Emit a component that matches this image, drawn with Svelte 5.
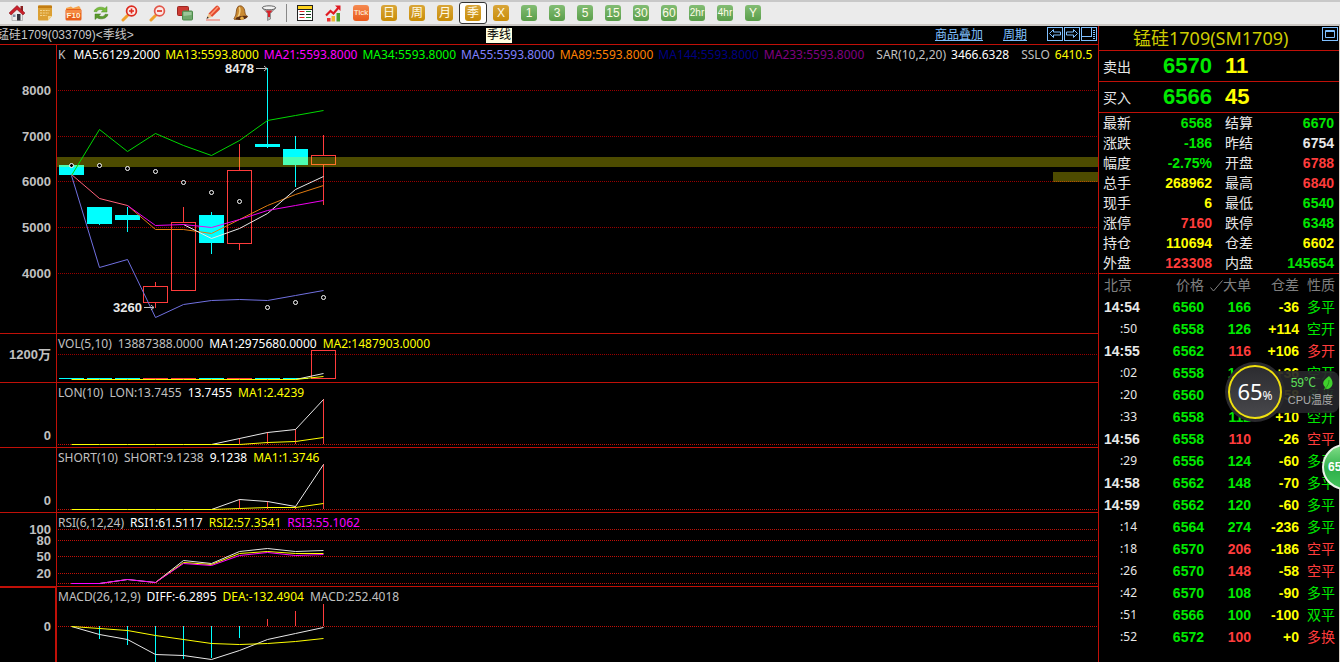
<script lang="ts">
    type Candle = {
        up: boolean;
        high: number;
        top: number;
        bottom: number;
        low: number;
    };

    type Series = { color: string; from?: number; ys: number[] };
    type Stick = { i: number; y: number; color: string };

    interface Pane {
        id: string;
        height: number;
        head: { text: string; color: string }[];
        labels: { text: string; y: number }[];
        grid: number[];
        bright?: boolean;
        base?: number;
        sticks?: Stick[];
        series: Series[];
    }

    const RED = "#ff3c3c";
    const CYAN = "#00ffff";
    const WHITE = "#e8e8e8";
    const YELLOW = "#ffff00";
    const MAGENTA = "#ff00ff";
    const GREY = "#c0c0c0";

    const periods = [
        { text: "日", kind: "gold" },
        { text: "周", kind: "gold" },
        { text: "月", kind: "gold" },
        { text: "季", kind: "gold", tip: "季线" },
        { text: "X", kind: "gold" },
        { text: "1", kind: "green" },
        { text: "3", kind: "green" },
        { text: "5", kind: "green" },
        { text: "15", kind: "green" },
        { text: "30", kind: "green" },
        { text: "60", kind: "green" },
        { text: "2hr", kind: "green small" },
        { text: "4hr", kind: "green small" },
        { text: "Y", kind: "green" },
    ];

    let period = $state("季");

    // pixel rows inside the K-line plot
    const candles: Candle[] = [
        { up: false, high: 120, top: 120, bottom: 130, low: 130 },
        { up: false, high: 162, top: 162, bottom: 179, low: 180 },
        { up: false, high: 162, top: 170, bottom: 175, low: 187 },
        { up: true, high: 237, top: 241, bottom: 258, low: 263 },
        { up: true, high: 162, top: 177, bottom: 246, low: 246 },
        { up: false, high: 167, top: 170, bottom: 198, low: 209 },
        { up: true, high: 99, top: 125, bottom: 199, low: 205 },
        { up: false, high: 23, top: 99, bottom: 102, low: 103 },
        { up: false, high: 91, top: 104, bottom: 120, low: 142 },
        { up: true, high: 90, top: 110, bottom: 120, low: 160 },
    ];

    const sar = [120, 120, 123, 126, 137, 147, 156, 262, 257, 252];

    const panes: Pane[] = [
        {
            id: "k",
            height: 288,
            head: [
                { text: "K", color: GREY },
                { text: "MA5:6129.2000", color: "#ffffff" },
                { text: "MA13:5593.8000", color: YELLOW },
                { text: "MA21:5593.8000", color: MAGENTA },
                { text: "MA34:5593.8000", color: "#00ff00" },
                { text: "MA55:5593.8000", color: "#8080ff" },
                { text: "MA89:5593.8000", color: "#ff8000" },
                { text: "MA144:5593.8000", color: "#000080" },
                { text: "MA233:5593.8000", color: "#800080" },
                { text: "SAR(10,2,20)", color: GREY },
                { text: "3466.6328", color: "#ffffff" },
                { text: "SSLO", color: GREY },
                { text: "6410.5", color: YELLOW },
            ],
            labels: [
                { text: "8000", y: 45 },
                { text: "7000", y: 91 },
                { text: "6000", y: 136 },
                { text: "5000", y: 182 },
                { text: "4000", y: 228 },
            ],
            grid: [45, 91, 136, 182, 228],
            series: [
                { color: "#00d800", ys: [130, 84, 106, 88, 100, 110, 95, 75, 70, 65] },
                { color: "#7070e0", ys: [130, 222, 214, 272, 259, 255, 254, 255, 250, 245] },
                { color: "#e07a10", from: 2, ys: [160, 184, 184, 188, 174, 160, 149, 140] },
                { color: WHITE, from: 4, ys: [179, 193, 183, 168, 144, 131] },
                { color: "#f000f0", from: 2, ys: [160, 180, 179, 182, 174, 165, 160, 155] },
                { color: "#ff6078", ys: [129, 153, 160] },
            ],
        },
        {
            id: "vol",
            height: 48,
            head: [
                { text: "VOL(5,10)", color: GREY },
                { text: "13887388.0000", color: GREY },
                { text: "MA1:2975680.0000", color: "#ffffff" },
                { text: "MA2:1487903.0000", color: YELLOW },
            ],
            labels: [{ text: "1200万", y: 20 }],
            grid: [20],
            series: [
                { color: WHITE, from: 8, ys: [45, 39] },
                { color: YELLOW, ys: [45, 45, 45, 45, 45, 45, 45, 45, 45, 42] },
            ],
        },
        {
            id: "lon",
            height: 64,
            head: [
                { text: "LON(10)", color: GREY },
                { text: "LON:13.7455", color: GREY },
                { text: "13.7455", color: "#ffffff" },
                { text: "MA1:2.4239", color: YELLOW },
            ],
            labels: [{ text: "0", y: 52 }],
            grid: [61],
            bright: true,
            base: 61,
            sticks: [
                { i: 6, y: 55, color: RED },
                { i: 7, y: 49, color: RED },
                { i: 8, y: 46, color: RED },
                { i: 9, y: 16, color: RED },
            ],
            series: [
                { color: WHITE, from: 5, ys: [61, 55, 49, 46, 16] },
                { color: YELLOW, ys: [61, 61, 61, 61, 61, 61, 61, 59, 58, 54] },
            ],
        },
        {
            id: "short",
            height: 64,
            head: [
                { text: "SHORT(10)", color: GREY },
                { text: "SHORT:9.1238", color: GREY },
                { text: "9.1238", color: "#ffffff" },
                { text: "MA1:1.3746", color: YELLOW },
            ],
            labels: [{ text: "0", y: 52 }],
            grid: [61],
            bright: true,
            base: 61,
            sticks: [
                { i: 6, y: 51, color: RED },
                { i: 7, y: 53, color: RED },
                { i: 8, y: 58, color: RED },
                { i: 9, y: 16, color: RED },
            ],
            series: [
                { color: WHITE, from: 5, ys: [61, 51, 53, 58, 16] },
                { color: YELLOW, ys: [61, 61, 61, 61, 61, 61, 60, 59, 59, 55] },
            ],
        },
        {
            id: "rsi",
            height: 73,
            head: [
                { text: "RSI(6,12,24)", color: GREY },
                { text: "RSI1:61.5117", color: "#ffffff" },
                { text: "RSI2:57.3541", color: YELLOW },
                { text: "RSI3:55.1062", color: MAGENTA },
            ],
            labels: [
                { text: "100", y: 16 },
                { text: "80", y: 27 },
                { text: "50", y: 43 },
                { text: "20", y: 60 },
            ],
            grid: [16, 27, 43, 60, 70],
            bright: true,
            series: [
                { color: WHITE, ys: [70, 70, 66, 69, 47, 50, 38, 35, 38, 37] },
                { color: YELLOW, from: 3, ys: [69, 49, 51, 40, 38, 40, 40] },
                { color: MAGENTA, ys: [70, 70, 66, 69, 50, 52, 42, 39, 42, 41] },
            ],
        },
        {
            id: "macd",
            height: 75,
            head: [
                { text: "MACD(26,12,9)", color: GREY },
                { text: "DIFF:-6.2895", color: "#ffffff" },
                { text: "DEA:-132.4904", color: YELLOW },
                { text: "MACD:252.4018", color: GREY },
            ],
            labels: [{ text: "0", y: 39 }],
            grid: [39],
            bright: true,
            base: 39,
            sticks: [
                { i: 1, y: 52, color: CYAN },
                { i: 2, y: 58, color: CYAN },
                { i: 3, y: 75, color: CYAN },
                { i: 4, y: 72, color: CYAN },
                { i: 5, y: 71, color: CYAN },
                { i: 6, y: 51, color: CYAN },
                { i: 7, y: 32, color: RED },
                { i: 8, y: 24, color: RED },
                { i: 9, y: 17, color: RED },
            ],
            series: [
                { color: WHITE, ys: [39, 47, 52, 67, 68, 72, 63, 52, 46, 40] },
                { color: YELLOW, ys: [39, 41, 43, 48, 52, 56, 57, 56, 54, 51] },
            ],
        },
    ];

    const quote = [
        ["最新", "6568", "g", "结算", "6670", "g"],
        ["涨跌", "-186", "g", "昨结", "6754", "w"],
        ["幅度", "-2.75%", "g", "开盘", "6788", "r"],
        ["总手", "268962", "y", "最高", "6840", "r"],
        ["现手", "6", "y", "最低", "6540", "g"],
        ["涨停", "7160", "r", "跌停", "6348", "g"],
        ["持仓", "110694", "y", "仓差", "6602", "y"],
        ["外盘", "123308", "r", "内盘", "145654", "g"],
    ];

    const ticks = [
        ["14:54", "6560", "166", "g", "-36", "多平"],
        [":50", "6558", "126", "g", "+114", "空开"],
        ["14:55", "6562", "116", "r", "+106", "多开"],
        [":02", "6558", "136", "g", "+36", "空开"],
        [":20", "6560", "108", "g", "-58", "多平"],
        [":33", "6558", "112", "g", "+10", "空开"],
        ["14:56", "6558", "110", "r", "-26", "空平"],
        [":29", "6556", "124", "g", "-60", "多平"],
        ["14:58", "6562", "148", "g", "-70", "多平"],
        ["14:59", "6562", "120", "g", "-60", "多平"],
        [":14", "6564", "274", "g", "-236", "多平"],
        [":18", "6570", "206", "r", "-186", "空平"],
        [":26", "6570", "148", "r", "-58", "空平"],
        [":42", "6570", "108", "g", "-90", "多平"],
        [":51", "6566", "100", "g", "-100", "双平"],
        [":52", "6572", "100", "r", "+0", "多换"],
    ];

    const STEP = 28;
    const cx = (i: number) => 14.5 + i * STEP;

    function points(s: Series) {
        return s.ys.map((y, i) => `${cx(i + (s.from ?? 0))},${y + 0.5}`).join(" ");
    }
</script>

<div class="app">
    <div class="toolbar" role="toolbar" aria-label="工具栏">
        <button aria-label="首页">
            <svg width="16" height="16" viewBox="0 0 16 16">
                <path d="M3 8v7.500h10.500V8L8 3.500z" fill="#ececec" stroke="#999" stroke-width=".6" />
                <path d="M8 9h3.500v6.500H8z" fill="#34343e" />
                <path d="M4 9.500h2.500V12H4z" fill="#7d8fa5" />
                <path d="M11.500 1H14v5h-2.500z" fill="#8a2020" />
                <path d="M8 .5L0 8l2 2 6-5.500L14 10l2-2z" fill="#c9202c" stroke="#7d1015" stroke-width=".5" />
            </svg>
        </button>
        <button aria-label="公告">
            <svg width="16" height="16" viewBox="0 0 16 16">
                <path d="M1 1.500Q1 .5 2 .5h12q1 0 1 1V11l-4 4.500H2q-1 0-1-1z" fill="#dca034" />
                <path d="M1 1.500Q1 .5 2 .5h12q1 0 1 1V3H1z" fill="#c27c12" />
                <path d="M15 11l-4 4.500V11z" fill="#f5d58a" />
                <path d="M3 5.500h9.500M3 8h9M3 10.500h6.500" stroke="#f4d48c" stroke-dasharray="2 .8" />
            </svg>
        </button>
        <button aria-label="F10">
            <svg width="17" height="16" viewBox="0 0 17 16">
                <path d="M1 3l5-1.500L8 3l6-2 1.500 2v10L1 15z" fill="#f6a24a" />
                <rect x=".5" y="4" width="16" height="11.500" rx="1.500" fill="#e8601c" />
                <path d="M1 5h15v3L1 10z" fill="#f58a42" />
                <text class="icon-f10" x="8.500" y="13" text-anchor="middle">F10</text>
            </svg>
        </button>
        <button aria-label="刷新">
            <svg width="16" height="16" viewBox="0 0 16 16">
                <path d="M1 6.500C2 2.500 8 .8 12 3.300L14 1.500V7H8.300l1.900-1.800C7.500 3.800 4.500 4.500 3.800 6.800z" fill="#78bd3c" stroke="#4f8e22" stroke-width=".5" />
                <path d="M15 9.500C14 13.500 8 15.200 4 12.700L2 14.500V9h5.700l-1.900 1.800c2.700 1.400 5.700.7 6.400-1.600z" fill="#5b9a2c" stroke="#3f771a" stroke-width=".5" />
            </svg>
        </button>
        <button aria-label="放大">
            <svg width="17" height="17" viewBox="0 0 17 17">
                <path d="M6.500 10.500l-4.500 4.500" stroke="#f0a02c" stroke-width="3" stroke-linecap="round" />
                <circle cx="10.500" cy="6" r="4.900" fill="#fbe9e6" stroke="#dc2b20" stroke-width="1.700" />
                <path d="M10.500 3.500v5M8 6h5" stroke="#e0281c" stroke-width="1.600" />
            </svg>
        </button>
        <button aria-label="缩小">
            <svg width="17" height="17" viewBox="0 0 17 17">
                <path d="M6.500 10.500l-4.500 4.500" stroke="#f0a02c" stroke-width="3" stroke-linecap="round" />
                <circle cx="10.500" cy="6" r="4.900" fill="#fbe9e6" stroke="#e2564a" stroke-width="1.700" />
                <path d="M8 6h5" stroke="#e0281c" stroke-width="1.600" />
            </svg>
        </button>
        <button aria-label="叠加">
            <svg width="16" height="16" viewBox="0 0 16 16">
                <rect x=".5" y="1.500" width="11" height="9" rx="1" fill="#cc3a33" stroke="#9c2722" />
                <rect x="5.500" y="6" width="10" height="9" rx="1" fill="#6fa86c" stroke="#4c8a4a" />
                <path d="M6.500 7h8v3l-8 1z" fill="#9bc698" />
            </svg>
        </button>
        <button aria-label="画线">
            <svg width="16" height="16" viewBox="0 0 16 16">
                <path d="M3.500 8.500L11 1q1.200-1 2.400.2l1.200 1.200q1 1.200 0 2.400L7 12z" fill="#e2492e" />
                <path d="M5.500 9.800L13 2" stroke="#ff9b78" stroke-width="1.500" />
                <path d="M3.500 8.500L7 12l-5.500 1.800z" fill="#f0c58c" />
                <path d="M2.500 11.500l-1 2.300 2.300-.7z" fill="#222" />
                <path d="M1 15h14" stroke="#f06a5a" />
            </svg>
        </button>
        <button aria-label="预警">
            <svg width="16" height="16" viewBox="0 0 16 16">
                <path d="M5 1.500c3.500-2 6.500 1 6.800 5 .2 2.500 1 4 3 5L2.500 14.500C1 15 .5 13.500 1.500 12.500 4 10 2.500 4 5 1.500z" fill="#c98a32" stroke="#7b4514" stroke-width=".8" />
                <path d="M6 2.500c1.500.5 1 7-1 9.500" stroke="#f3cf86" stroke-width="1.500" fill="none" />
                <ellipse cx="8.500" cy="12.800" rx="6" ry="1.900" fill="#5a2d10" transform="rotate(-10 8.500 12.800)" />
                <circle cx="9" cy="13.300" r="1.800" fill="#e9ae45" />
            </svg>
        </button>
        <button aria-label="筛选">
            <svg width="16" height="16" viewBox="0 0 16 16">
                <path d="M1.500 3L6.500 8.500V15.500l3-1.500V8.500l5-5.500z" fill="#b9b9b9" stroke="#666" stroke-width=".6" />
                <ellipse cx="8" cy="2.800" rx="6.700" ry="2" fill="#f3f3f3" stroke="#555" stroke-width=".9" />
                <path d="M4.500 5.500h7L9 8.500v3.500H7V8.500z" fill="#d7222a" />
            </svg>
        </button>
        <span class="separator"></span>
        <button aria-label="报价表">
            <svg width="16" height="16" viewBox="0 0 16 16">
                <rect x=".5" y=".5" width="15" height="15" fill="#fff" stroke="#222" />
                <path d="M1 1h14v3.500H1z" fill="#ffd21c" />
                <path d="M1 4.500h14" stroke="#222" />
                <path d="M2.500 6.500h5M2.500 12.500h5" stroke="#d22" />
                <path d="M9 6.500h5M9 12.500h5" stroke="#1b8a2c" />
                <path d="M2.500 9.500h5M9 9.500h5" stroke="#222" />
            </svg>
        </button>
        <button aria-label="走势图">
            <svg width="17" height="17" viewBox="0 0 17 17">
                <path d="M2 13h3.500v3.500H2z" fill="#e33" />
                <path d="M6.500 11h3.500v5.500H6.500z" fill="#f2b632" />
                <path d="M11.500 8H15v8.500h-3.500z" fill="#4ca02e" />
                <path d="M1 10.500l4.500-4.500 3 2.500L14 2" fill="none" stroke="#e01b22" stroke-width="2.200" />
                <path d="M10 .5h5.500V6z" fill="#e01b22" />
            </svg>
        </button>
        <button class="period"><span class="tile tick">Tick</span></button>
        {#each periods as p (p.text)}
            <button
                class="period"
                class:selected={period === p.text}
                aria-pressed={period === p.text}
                onclick={() => (period = p.text)}
            >
                <span class="tile {p.kind}">{p.text}</span>
                {#if period === p.text && p.tip}
                    <span class="tip" role="tooltip">{p.tip}</span>
                {/if}
            </button>
        {/each}
    </div>

    <main>
        <section class="charts">
            <header class="chart-title">
                <h1>锰硅1709(033709)&lt;季线&gt;</h1>
                <nav>
                    <a href="#overlay">商品叠加</a>
                    <a href="#period">周期</a>
                    <div class="view-buttons">
                        <button aria-label="向左">
                            <svg width="16" height="14" viewBox="0 0 16 14">
                                <rect x=".5" y=".5" width="15" height="13" />
                                <path d="M2.500 6.500l4-4v2.500h7v3h-7v2.500z" />
                            </svg>
                        </button>
                        <button aria-label="向右">
                            <svg width="16" height="14" viewBox="0 0 16 14">
                                <rect x=".5" y=".5" width="15" height="13" />
                                <path d="M13.500 6.500l-4-4v2.500h-7v3h7v2.500z" />
                            </svg>
                        </button>
                        <button aria-label="布局">
                            <svg width="16" height="14" viewBox="0 0 16 14">
                                <rect x=".5" y=".5" width="15" height="13" />
                                <path d="M1 9.500h10M10.500 1v9M12 3.500h2M12 5.500h2M12 7.500h2M12 9.500h2M12 11.500h2" />
                            </svg>
                        </button>
                    </div>
                </nav>
            </header>

            {#each panes as pane (pane.id)}
                <div class="pane {pane.id}">
                    <svg class="axis" height={pane.height}>
                        {#each pane.labels as label}
                            <text x="51" y={label.y + 5} text-anchor="end">{label.text}</text>
                        {/each}
                    </svg>
                    <div class="plot">
                        <svg width="100%" height={pane.height}>
                            {#each pane.grid as y}
                                <line
                                    class="grid"
                                    class:bright={pane.bright}
                                    x1="1"
                                    x2="100%"
                                    y1={y + 0.5}
                                    y2={y + 0.5}
                                />
                            {/each}

                            {#if pane.id === "k"}
                                {#each candles as c, i}
                                    {@const color = c.up ? RED : CYAN}
                                    <path
                                        class="crisp"
                                        d="M{cx(i)} {c.high}V{c.top}M{cx(i)} {c.bottom}V{c.low}"
                                        stroke={color}
                                    />
                                    {#if c.up}
                                        <rect
                                            class="crisp"
                                            x={cx(i) - 12}
                                            y={c.top + 0.5}
                                            width="24"
                                            height={c.bottom - c.top - 1}
                                            fill="none"
                                            stroke={color}
                                        />
                                    {:else}
                                        <rect
                                            x={cx(i) - 12.5}
                                            y={c.top}
                                            width="25"
                                            height={c.bottom - c.top}
                                            fill={color}
                                        />
                                    {/if}
                                {/each}
                                <rect class="band" x="0" y="112" width="100%" height="10" />
                                <svg x="100%" y="0" overflow="visible">
                                    <rect class="band" x="-45" y="127" width="45" height="10" />
                                </svg>
                            {/if}

                            {#if pane.id === "vol"}
                                {#each candles.slice(0, 9) as c, i}
                                    <rect
                                        x={cx(i) - 12.5}
                                        y="44"
                                        width="25"
                                        height="1"
                                        fill={c.up ? RED : CYAN}
                                    />
                                {/each}
                                <rect
                                    class="crisp"
                                    x={cx(9) - 12}
                                    y="16.500"
                                    width="24"
                                    height="28"
                                    fill="none"
                                    stroke={RED}
                                />
                            {/if}

                            {#each pane.sticks ?? [] as s}
                                <line
                                    class="crisp"
                                    x1={cx(s.i)}
                                    x2={cx(s.i)}
                                    y1={pane.base}
                                    y2={s.y}
                                    stroke={s.color}
                                />
                            {/each}

                            {#each pane.series as s}
                                <polyline points={points(s)} stroke={s.color} />
                            {/each}

                            {#if pane.id === "k"}
                                {#each sar as y, i}
                                    <circle class="sar" cx={cx(i)} cy={y + 0.5} r="2" />
                                {/each}
                                <text class="mark" x="168" y="28">8478</text>
                                <path class="arrow" d="M199 23.500h11M207 21l3 2.500l-3 2.500" />
                                <text class="mark" x="56" y="267">3260</text>
                                <path class="arrow" d="M87 262.500h10M94 260l3 2.500l-3 2.500" />
                            {/if}
                        </svg>
                        <div class="head">
                            {#each pane.head as h}
                                <span style:color={h.color}>{h.text}</span>
                            {/each}
                        </div>
                    </div>
                </div>
            {/each}
        </section>

        <aside class="quote">
            <header>
                <h2>锰硅1709(SM1709)</h2>
                <button aria-label="最大化">
                    <svg width="16" height="14" viewBox="0 0 16 14">
                        <rect x=".5" y=".5" width="15" height="13" />
                        <path d="M3.500 3.500h9v7h-9zM3.500 4.500h9" />
                    </svg>
                </button>
            </header>

            <div class="order">
                <span>卖出</span><b class="g">6570</b><b class="y">11</b>
            </div>
            <div class="order">
                <span>买入</span><b class="g">6566</b><b class="y">45</b>
            </div>

            <dl>
                {#each quote as q}
                    <dt>{q[0]}</dt>
                    <dd class={q[2]}>{q[1]}</dd>
                    <dt class="second">{q[3]}</dt>
                    <dd class={q[5]}>{q[4]}</dd>
                {/each}
            </dl>

            <table>
                <thead>
                    <tr>
                        <th class="time">北京</th>
                        <th class="price">价格</th>
                        <th class="lots">
                            <svg width="13" height="13" viewBox="0 0 13 13" aria-hidden="true">
                                <path d="M.5 8.500l3 3.500L12.500 1.500" />
                            </svg>大单
                        </th>
                        <th class="diff">仓差</th>
                        <th class="kind">性质</th>
                    </tr>
                </thead>
                <tbody>
                    {#each ticks as t}
                        <tr>
                            <td class="time" class:seconds={t[0].startsWith(":")}>{t[0]}</td>
                            <td class="g">{t[1]}</td>
                            <td class={t[3]}>{t[2]}</td>
                            <td class="y">{t[4]}</td>
                            <td class="kind {t[3]}">{t[5]}</td>
                        </tr>
                    {/each}
                </tbody>
            </table>

            <div class="cpu">
                <div class="cpu-info">
                    <span class="temp">
                        59℃
                        <svg width="11" height="15" viewBox="0 0 11 15">
                            <path d="M7 0c4 4 5 9 1 12-2 1.500-4 1-4.500.500L2 14.500 3 11C-1 7 2 4 7 0z" fill="#3fd12c" />
                            <path d="M7 4c0 3-1 6-4.500 9" stroke="#1d7a14" stroke-width=".7" fill="none" />
                        </svg>
                    </span>
                    <span class="cpu-label">CPU温度</span>
                </div>
                <div class="gauge">65<small>%</small></div>
            </div>
            <div class="ball-clip"><div class="ball">65</div></div>
        </aside>
    </main>
</div>

<style>
    :global(body) {
        margin: 0;
        background: #000;
    }

    .app {
        --line: #c01008;
        --sky: #80c0ff;
        min-height: 100vh;
        display: flex;
        flex-direction: column;
        color: #e8e8e8;
        font-family: "Liberation Sans", "Noto Sans CJK SC", sans-serif;
        font-size: 12px;
    }

    button {
        border: none;
        background: none;
        padding: 0;
        margin: 0;
        font: inherit;
        color: inherit;
        cursor: pointer;
    }

    h1,
    h2 {
        margin: 0;
        font-weight: normal;
    }

    .toolbar {
        display: flex;
        align-items: center;
        height: 26px;
        box-sizing: border-box;
        padding-left: 3px;
        background: #ebebeb;
        border-top: 2px solid #c8c8c8;
        border-bottom: 2px solid #cbc7c3;
    }

    .toolbar button {
        width: 28px;
        height: 22px;
        display: flex;
        flex: none;
        align-items: center;
        justify-content: center;
        position: relative;
        box-sizing: border-box;
    }

    .toolbar .selected {
        background: #fff;
        border: 1px solid #333;
        border-radius: 3px;
    }

    .icon-f10 {
        font: bold 8px "Liberation Sans", sans-serif;
        fill: #fff4d8;
    }

    .separator {
        width: 1px;
        height: 18px;
        margin: 0 4px 0 3px;
        background: #888;
    }

    .tile {
        width: 16px;
        height: 16px;
        border-radius: 3px;
        color: #fffbe8;
        font-size: 12px;
        line-height: 16px;
        text-align: center;
        white-space: nowrap;
    }

    .tile.gold {
        background: linear-gradient(#d9a63a, #c98d08);
    }

    .tile.green {
        background: linear-gradient(#83bd74, #5a9e4a);
    }

    .tile.tick {
        background: linear-gradient(#f58a50, #ea5a1c);
        font-size: 8px;
    }

    .tile.small {
        font-size: 10px;
    }

    .tip {
        position: absolute;
        top: 25px;
        left: 26px;
        z-index: 2;
        padding: 0 1px;
        background: #ffffe1;
        color: #000;
        line-height: 15px;
        white-space: nowrap;
    }

    main {
        flex: 1;
        display: grid;
        grid-template-columns: minmax(0, 1fr) 242px;
    }

    .charts {
        display: flex;
        flex-direction: column;
    }

    .chart-title {
        display: flex;
        justify-content: space-between;
        height: 18px;
        overflow: hidden;
        line-height: 18px;
    }

    .chart-title h1 {
        margin-left: -3px;
        font-size: 12px;
        color: #c8c8c8;
    }

    .chart-title nav {
        display: flex;
        gap: 20px;
        padding-right: 1px;
    }

    .chart-title a {
        color: var(--sky);
        text-decoration: underline;
    }

    .view-buttons {
        display: flex;
        gap: 1px;
    }

    .view-buttons button,
    .quote header button {
        height: 16px;
        display: flex;
        align-items: center;
    }

    .view-buttons svg,
    .quote header svg {
        fill: none;
        stroke: var(--sky);
    }

    .pane {
        display: grid;
        grid-template-columns: 57px minmax(0, 1fr);
        border-top: 1px solid var(--line);
    }

    .pane svg {
        display: block;
    }

    .axis {
        width: 56px;
        border-right: 1px solid var(--line);
        font-size: 13px;
        font-weight: bold;
        fill: #c0c0c0;
    }

    .macd .axis {
        width: 55px;
        border-right: 2px solid var(--line);
        box-shadow: inset 0 1px var(--line);
    }

    .plot {
        display: grid;
        overflow: hidden;
    }

    .plot > * {
        grid-area: 1 / 1;
    }

    .grid {
        stroke: #900;
        stroke-dasharray: 1 1;
        shape-rendering: crispEdges;
    }

    .grid.bright {
        stroke: #c01008;
    }

    .crisp {
        shape-rendering: crispEdges;
    }

    .band {
        fill: rgba(255, 247, 0, 0.3);
    }

    polyline {
        fill: none;
    }

    .sar {
        fill: #000;
        stroke: #fff;
    }

    .mark {
        font-size: 13px;
        font-weight: bold;
        fill: #e8e8e8;
    }

    .arrow {
        fill: none;
        stroke: #c0c0c0;
    }

    .head {
        position: relative;
        display: flex;
        gap: 6px;
        padding: 1px 0 0 1px;
        font-family: "Noto Sans", sans-serif;
        font-size: 12px;
        line-height: 17px;
        height: 17px;
        white-space: nowrap;
    }

    .k .head {
        gap: 5px;
    }

    .k .head span:first-child {
        margin-right: 3px;
    }

    .k .head span:nth-child(9),
    .k .head span:nth-child(11) {
        margin-right: 7px;
    }

    .quote {
        position: relative;
        border-left: 1px solid var(--line);
        border-right: 1px solid #d8d0c8;
        font-size: 14px;
    }

    .quote header {
        display: flex;
        justify-content: space-between;
        height: 24px;
        padding: 0 1px 0 34px;
        border-bottom: 1px solid var(--line);
    }

    .quote h2 {
        font-family: "Noto Sans", "Noto Sans CJK SC", sans-serif;
        font-size: 18px;
        line-height: 24px;
        color: #cccc00;
    }

    .order {
        display: grid;
        grid-template-columns: 44px 65px 1fr;
        align-items: center;
        height: 30px;
        padding-left: 4px;
        border-bottom: 1px solid var(--line);
    }

    .order b {
        font-size: 22px;
        text-align: right;
    }

    .order .y {
        text-align: left;
        padding-left: 13px;
    }

    dl {
        display: grid;
        grid-template-columns: 40px 69px 45px 1fr;
        margin: 0;
        padding: 0 5px 0 4px;
        line-height: 20px;
        border-bottom: 1px solid var(--line);
    }

    dt.second {
        padding-left: 13px;
    }

    dd {
        margin: 0;
        text-align: right;
        font-weight: bold;
    }

    table {
        width: 100%;
        table-layout: fixed;
        border-collapse: collapse;
        line-height: 22px;
    }

    th,
    td {
        height: 22px;
        padding: 0;
        text-align: right;
        font-weight: bold;
        white-space: nowrap;
    }

    th {
        font-weight: normal;
        color: #808080;
    }

    th svg {
        fill: none;
        stroke: #808080;
        vertical-align: -2px;
    }

    .time {
        width: 37px;
        padding-left: 5px;
        text-align: left;
    }

    td.seconds {
        padding-right: 4px;
        text-align: right;
        font-family: "Noto Sans", sans-serif;
        font-size: 12px;
        font-weight: normal;
    }

    .price {
        width: 63px;
    }

    .lots {
        width: 47px;
    }

    .diff {
        width: 48px;
    }

    .kind {
        padding-right: 4px;
        font-weight: normal;
    }

    .g {
        color: #00e800;
    }

    .r {
        color: #ff3c3c;
    }

    .y {
        color: #ffff00;
    }

    .w {
        color: #e8e8e8;
    }

    .cpu {
        position: absolute;
        top: 336px;
        right: 0;
        display: flex;
        align-items: center;
        justify-content: flex-end;
    }

    .gauge {
        position: absolute;
        right: 57px;
        width: 50px;
        height: 50px;
        border: 2px solid #f0e010;
        border-radius: 50%;
        background: linear-gradient(#2c2c30, #48484c);
        box-shadow: 0 0 0 3px #2a2a2e;
        color: #fff;
        font-family: "Noto Sans", sans-serif;
        font-size: 22px;
        line-height: 48px;
        text-align: center;
    }

    .gauge small {
        font-size: 12px;
    }

    .cpu-info {
        display: flex;
        flex-direction: column;
        align-items: flex-end;
        box-sizing: border-box;
        width: 84px;
        height: 42px;
        margin: 9px 0;
        padding: 4px 6px 0 0;
        border-radius: 0 8px 8px 0;
        background: rgba(38, 38, 42, 0.92);
        font-size: 11px;
        line-height: 17px;
        color: #aaa;
    }

    .temp {
        display: flex;
        align-items: center;
        gap: 6px;
        font-size: 12px;
        color: #5ee05a;
    }

    .ball-clip {
        position: absolute;
        top: 418px;
        right: -1px;
        width: 18px;
        height: 46px;
        overflow: hidden;
    }

    .ball {
        box-sizing: border-box;
        width: 46px;
        height: 46px;
        padding-left: 4px;
        border: 2px solid #e8f4e8;
        border-radius: 50%;
        background: linear-gradient(#7fdc86, #2eb04a 55%, #45c45c);
        color: #fff;
        font-size: 12px;
        font-weight: bold;
        line-height: 42px;
    }
</style>
